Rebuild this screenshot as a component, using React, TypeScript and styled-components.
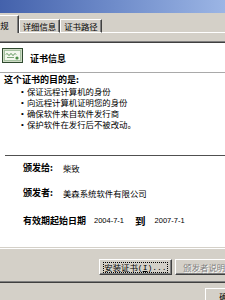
import styled, { createGlobalStyle } from 'styled-components';

const face = '#d4d0c8';
const shadow = '#808080';
const darkShadow = '#404040';

const GlobalStyle = createGlobalStyle`
    html, body {
        margin: 0;
        padding: 0;
    }
    body {
        width: 225px;
        height: 300px;
        overflow: hidden;
        background: ${face};
        color: #000;
        font-family: "Noto Sans CJK SC", "Noto Sans", sans-serif;
        font-size: 8.4px;
    }
`;

// the dialog is wider than the shot and starts left of it
const Window = styled.div`
    width: 300px;
    margin-left: -20px;
    background: ${face};
`;

const TitleBar = styled.div`
    height: 13px;
    background: linear-gradient(90deg, #3c5aa6 0%, #6f8cca 45%, #b2caf2 100%);
`;

const TabStrip = styled.div`
    display: flex;
    align-items: flex-end;
    height: 20px;
    padding-left: 2px;
`;

const Tab = styled.div<{ $active?: boolean }>`
    box-sizing: border-box;
    display: flex;
    align-items: center;
    height: ${p => (p.$active ? '18px' : '14px')};
    padding: ${p => (p.$active ? '2px 9px 0' : '0 3px')};
    border-top: 1px solid #fff;
    border-left: 1px solid #fff;
    border-right: 1px solid ${darkShadow};
    border-bottom: ${p => (p.$active ? 'none' : '1px solid #fff')};
    box-shadow: inset -1px 0 0 ${shadow};
    line-height: 11px;
    white-space: nowrap;
`;

const TabFill = styled.div`
    flex: 1;
    height: 1px;
    background: #fff;
`;

const TabPanel = styled.div`
    padding: 8px 8px 7px;
    border-left: 1px solid #fff;
    border-right: 1px solid ${darkShadow};
    border-bottom: 1px solid ${darkShadow};
    box-shadow: inset -1px -1px 0 ${shadow};
`;

const InfoBox = styled.div`
    box-sizing: border-box;
    height: 208px;
    display: flex;
    flex-direction: column;
    background: #fff;
    border-style: solid;
    border-width: 1px;
    border-color: ${shadow} #fff #fff ${shadow};
    box-shadow: inset 1px 1px 0 ${darkShadow}, inset -1px -1px 0 ${face};
`;

const Header = styled.div`
    display: flex;
    align-items: flex-start;
    gap: 7px;
    height: 30px;
    box-sizing: border-box;
    padding: 6px 0 0 12px;
`;

const HeaderTitle = styled.div`
    margin-top: 5px;
    font-size: 9px;
    font-weight: 700;
    line-height: 12px;
`;

const HeaderRule = styled.div`
    height: 1px;
    margin: 0 1px;
    background: #a9a9a9;
`;

const Purpose = styled.div`
    margin-top: 1px;
    padding-left: 14px;
`;

const BoldLine = styled.div`
    font-size: 9px;
    font-weight: 700;
    line-height: 12px;
`;

const List = styled.ul`
    margin: 0;
    padding: 0 0 0 17px;
    list-style: none;
`;

const Item = styled.li`
    display: flex;
    line-height: 11px;
    white-space: nowrap;
`;

const Bullet = styled.span`
    width: 6px;
    flex: none;
    font-family: "Liberation Sans", Arial, sans-serif;
    font-size: 8px;
`;

const Divider = styled.div`
    height: 1px;
    margin: 25px 15px 0;
    background: #505050;
`;

const Field = styled.div<{ $gap: number }>`
    display: flex;
    align-items: center;
    height: 11px;
    margin-top: ${p => p.$gap}px;
    padding-left: 33px;
    white-space: nowrap;
`;

const Label = styled.span<{ $width?: number }>`
    ${p => p.$width && `width: ${p.$width}px;`}
    flex: none;
    font-size: 9px;
    font-weight: 700;
`;

const DateText = styled.span<{ $gap: number }>`
    margin-left: ${p => p.$gap}px;
    font-family: "Liberation Sans", Arial, sans-serif;
    font-size: 7.5px;
`;

const To = styled.span`
    margin-left: 11px;
    font-size: 10.5px;
    font-weight: 700;
`;

const ButtonRow = styled.div`
    display: flex;
    gap: 3px;
    margin-top: 10px;
    padding-left: 110px;
`;

const Button = styled.button<{ $width?: number; $disabled?: boolean }>`
    box-sizing: border-box;
    flex: none;
    width: ${p => p.$width || 73}px;
    height: 16px;
    display: flex;
    align-items: center;
    justify-content: center;
    padding: 0;
    background: ${face};
    border-style: solid;
    border-width: 1px;
    border-color: #fff ${darkShadow} ${darkShadow} #fff;
    box-shadow: inset -1px -1px 0 ${shadow};
    font: inherit;
    line-height: 11px;
    white-space: nowrap;
    color: ${p => (p.$disabled ? shadow : '#000')};
    text-shadow: ${p => (p.$disabled ? '1px 1px 0 #fff' : 'none')};
`;

const FocusRing = styled.span`
    box-sizing: border-box;
    width: calc(100% - 6px);
    height: 11px;
    display: flex;
    align-items: center;
    justify-content: center;
    border: 1px dotted #000;
`;

const Mnemonic = styled.span`
    font-family: "Liberation Mono", monospace;
    font-size: 8px;
`;

const Key = styled.span`
    text-decoration: underline;
`;

const Footer = styled.div`
    display: flex;
    padding: 5px 0 0 225px;
`;

const CertIcon = () => (
    <svg width="21" height="15" viewBox="0 0 21 15">
        <rect x="0.5" y="0.5" width="20" height="14" fill="#cfdcc6" stroke="#2f4a2f" />
        <rect x="2.5" y="2.5" width="16" height="10" fill="#f3f7ee" stroke="#6d9c6a" strokeDasharray="1 1" />
        <path d="M4 6.5 q1 -2 2 0 t2 0 t2 0 t2 0 t2 0" fill="none" stroke="#3f7f3c" strokeWidth="1" />
        <path d="M5 9.5 h7" stroke="#7ea77a" strokeWidth="1" />
        <circle cx="15" cy="10" r="1.6" fill="#4f8f4a" />
    </svg>
);

const purposes = [
    '保证远程计算机的身份',
    '向远程计算机证明您的身份',
    '确保软件来自软件发行商',
    '保护软件在发行后不被改动。',
];

export default function App() {
    return (
        <>
            <GlobalStyle />
            <Window>
                <TitleBar />
                <TabStrip>
                    <Tab $active>常规</Tab>
                    <Tab>详细信息</Tab>
                    <Tab>证书路径</Tab>
                    <TabFill />
                </TabStrip>
                <TabPanel>
                    <InfoBox>
                        <Header>
                            <CertIcon />
                            <HeaderTitle>证书信息</HeaderTitle>
                        </Header>
                        <HeaderRule />
                        <Purpose>
                            <BoldLine>这个证书的目的是:</BoldLine>
                            <List>
                                {purposes.map(text => (
                                    <Item key={text}>
                                        <Bullet>•</Bullet>
                                        {text}
                                    </Item>
                                ))}
                            </List>
                        </Purpose>
                        <Divider />
                        <Field $gap={6}>
                            <Label $width={40}>颁发给:</Label>
                            柴致
                        </Field>
                        <Field $gap={14}>
                            <Label $width={40}>颁发者:</Label>
                            美森系统软件有限公司
                        </Field>
                        <Field $gap={17}>
                            <Label>有效期起始日期</Label>
                            <DateText $gap={8}>2004-7-1</DateText>
                            <To>到</To>
                            <DateText $gap={9}>2007-7-1</DateText>
                        </Field>
                    </InfoBox>
                    <ButtonRow>
                        <Button>
                            <FocusRing>
                                安装证书
                                <Mnemonic>
                                    (<Key>I</Key>)...
                                </Mnemonic>
                            </FocusRing>
                        </Button>
                        <Button $disabled>
                            颁发者说明
                            <Mnemonic>
                                (<Key>S</Key>)
                            </Mnemonic>
                        </Button>
                    </ButtonRow>
                </TabPanel>
                <Footer>
                    <Button $width={45}>确定</Button>
                </Footer>
            </Window>
        </>
    );
}
